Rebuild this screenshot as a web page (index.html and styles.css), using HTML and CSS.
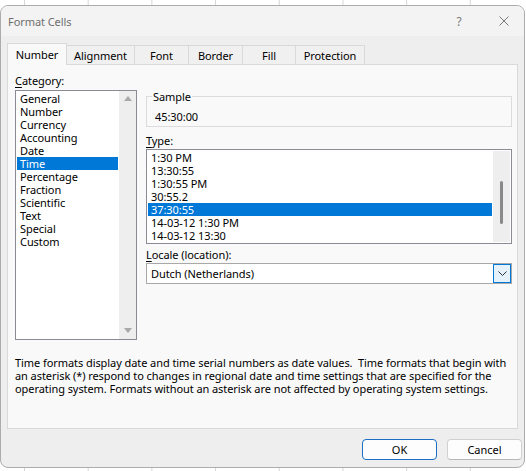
FILE: index.html
```html
<!DOCTYPE html>
<html lang="en">
<head>
    <meta charset="UTF-8">
    <title>Format Cells</title>
    <link rel="stylesheet" href="styles.css">
</head>
<body>
    <div class="dialog">
        <div class="titlebar">
            <span class="title">Format Cells</span>
            <span class="cap help">?</span>
            <span class="cap close">
                <svg width="10" height="10" viewBox="0 0 10 10"><path d="M0.5 0.5L9.5 9.5M9.5 0.5L0.5 9.5" stroke="#7a7a7a" stroke-width="1" fill="none"/></svg>
            </span>
        </div>
        <div class="content">
            <div class="tabs">
                <div class="tab active tab-number">Number</div>
                <div class="tab tab-align">Alignment</div>
                <div class="tab tab-font">Font</div>
                <div class="tab tab-border">Border</div>
                <div class="tab tab-fill">Fill</div>
                <div class="tab tab-protect">Protection</div>
            </div>
            <div class="panel">
                <div class="columns">
                    <div class="left">
                        <div class="label"><u>C</u>ategory:</div>
                        <div class="listbox cat-list">
                            <div class="items">
                                <div class="item">General</div>
                                <div class="item">Number</div>
                                <div class="item">Currency</div>
                                <div class="item">Accounting</div>
                                <div class="item">Date</div>
                                <div class="item sel">Time</div>
                                <div class="item">Percentage</div>
                                <div class="item">Fraction</div>
                                <div class="item">Scientific</div>
                                <div class="item">Text</div>
                                <div class="item">Special</div>
                                <div class="item">Custom</div>
                            </div>
                            <div class="scroll arrows">
                                <svg width="8" height="5" viewBox="0 0 8 5"><path d="M4 0L8 5H0Z" fill="#a8a8a8"/></svg>
                                <svg width="8" height="5" viewBox="0 0 8 5"><path d="M0 0H8L4 5Z" fill="#a8a8a8"/></svg>
                            </div>
                        </div>
                    </div>
                    <div class="right">
                        <fieldset class="sample">
                            <legend>Sample</legend>
                            <div>45:30:00</div>
                        </fieldset>
                        <div class="label type-label"><u>T</u>ype:</div>
                        <div class="listbox type-list">
                            <div class="items">
                                <div class="item">1:30 PM</div>
                                <div class="item">13:30:55</div>
                                <div class="item">1:30:55 PM</div>
                                <div class="item">30:55.2</div>
                                <div class="item sel">37:30:55</div>
                                <div class="item">14-03-12 1:30 PM</div>
                                <div class="item">14-03-12 13:30</div>
                            </div>
                            <div class="scroll">
                                <div class="thumb"></div>
                            </div>
                        </div>
                        <div class="label locale-label"><u>L</u>ocale (location):</div>
                        <div class="combo">
                            <span>Dutch (Netherlands)</span>
                            <span class="drop">
                                <svg width="9" height="5" viewBox="0 0 9 5"><path d="M0.5 0.5L4.5 4.5L8.5 0.5" stroke="#333" stroke-width="1" fill="none"/></svg>
                            </span>
                        </div>
                    </div>
                </div>
                <p class="desc">Time formats display date and time serial numbers as date values.&nbsp; Time formats that begin with<br>an asterisk (*) respond to changes in regional date and time settings that are specified for the<br>operating system. Formats without an asterisk are not affected by operating system settings.</p>
            </div>
            <div class="buttons">
                <button class="btn primary">OK</button>
                <button class="btn">Cancel</button>
            </div>
        </div>
    </div>
</body>
</html>
```

FILE: styles.css
```css
body {
    margin: 0;
    font-family: "Noto Sans", sans-serif;
    font-size: 11px;
    line-height: 13px;
    letter-spacing: -0.07px;
    color: #000;
    background-color: #fff;
    background-image: linear-gradient(to right, #d6d6d6 1px, transparent 1px);
    background-size: 63.7px 100%;
    background-position: 24px 0;
    height: 471px;
    overflow: hidden;
}
.dialog {
    margin-top: 5px;
    width: 525px;
    height: 463px;
    box-sizing: border-box;
    border: 1px solid #acacac;
    border-radius: 8px;
    background: #eeeeee;
    overflow: hidden;
    display: flex;
    flex-direction: column;
}
.titlebar {
    height: 30px;
    display: flex;
    align-items: center;
    padding-left: 7px;
    background: #f3f3f3;
    color: #6f6f6f;
}
.title {
    flex: 1;
}
.cap {
    width: 40px;
    display: flex;
    justify-content: center;
    align-items: center;
}
.help {
    margin-right: 5px;
    font-size: 12px;
    color: #7a7a7a;
}
.content {
    flex: 1;
    padding: 7px 6px 0;
    display: flex;
    flex-direction: column;
}
.tabs {
    display: flex;
    align-items: flex-end;
    height: 21px;
}
.tab {
    height: 19px;
    box-sizing: border-box;
    border: 1px solid #d9d9d9;
    border-bottom: none;
    margin-left: -1px;
    padding-top: 1px;
    text-align: center;
    line-height: 18px;
    background: #f0f0f0;
}
.tab.active {
    position: relative;
    z-index: 1;
    height: 22px;
    margin: 0 0 -1px 0;
    line-height: 19px;
    background: #f9f9f9;
}
.tab-number { width: 60px; }
.tab-align { width: 69px; }
.tab-font { width: 55px; }
.tab-border { width: 55px; }
.tab-fill { width: 54px; }
.tab-protect { width: 70px; }
.panel {
    height: 365px;
    box-sizing: border-box;
    border: 1px solid #d9d9d9;
    background: #f9f9f9;
    padding: 9px 5px 0 7px;
}
.columns {
    display: flex;
    gap: 9px;
}
.left {
    width: 122px;
}
.right {
    width: 366px;
}
.label u {
    text-decoration-thickness: 1px;
    text-underline-offset: 2px;
}
.listbox {
    display: flex;
    box-sizing: border-box;
    border: 1px solid #8b8b96;
    background: #fff;
}
.cat-list {
    height: 250px;
    margin-top: 3px;
}
.items {
    flex: 1;
    padding: 1px;
}
.item {
    height: 13px;
    padding-left: 3px;
    white-space: nowrap;
}
.item.sel {
    background: #0078d7;
    color: #fff;
}
.scroll {
    width: 17px;
    background: #eeeeee;
}
.arrows {
    display: flex;
    flex-direction: column;
    align-items: center;
    justify-content: space-between;
    padding: 5px 0 6px;
    box-sizing: border-box;
}
.sample {
    margin: 16px 0 0;
    padding: 7px 0 3px 8px;
    border: 1px solid #dcdcdc;
    height: 37px;
    box-sizing: border-box;
}
.sample legend {
    margin-left: -3px;
    padding: 0 1px;
}
.type-label {
    margin-top: 7px;
}
.type-list {
    height: 95px;
    margin-top: 2px;
}
.type-list .scroll {
    margin: 1px 1px 1px 0;
}
.thumb {
    width: 3px;
    height: 43px;
    margin: 30px auto 0;
    border-radius: 2px;
    background: #8a8a8a;
}
.locale-label {
    margin-top: 4px;
}
.combo {
    display: flex;
    align-items: center;
    height: 21px;
    box-sizing: border-box;
    margin-top: 2px;
    padding-left: 4px;
    border: 1px solid #a8a8a8;
    background: #fff;
}
.drop {
    margin-left: auto;
    width: 18px;
    height: 19px;
    box-sizing: border-box;
    display: flex;
    align-items: center;
    justify-content: center;
    border: 1px solid #0078d7;
    background: #e5f1fb;
}
.desc {
    margin: 16px 0 0;
    white-space: nowrap;
}
.buttons {
    display: flex;
    justify-content: flex-end;
    gap: 10px;
    margin: 10px -4px 0 0;
}
.btn {
    width: 75px;
    height: 21px;
    box-sizing: border-box;
    border: 1px solid #d0d0d0;
    border-bottom-color: #b8b8b8;
    border-radius: 4px;
    background: #fdfdfd;
    font: inherit;
    color: #000;
}
.btn.primary {
    border-color: #1a6fc4;
}
```
